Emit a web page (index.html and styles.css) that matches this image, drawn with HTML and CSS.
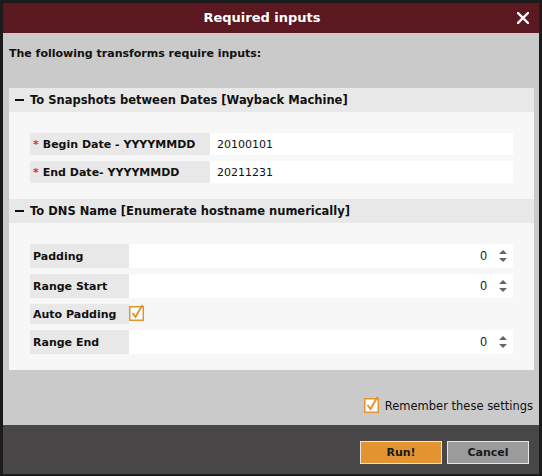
FILE: index.html
```html
<!DOCTYPE html>
<html>
<head>
<meta charset="utf-8">
<link rel="stylesheet" href="styles.css">
</head>
<body>
<div class="dialog">
  <div class="titlebar">
    <span class="title">Required inputs</span>
    <svg class="close" width="12" height="12" viewBox="0 0 12 12"><path d="M1 1L11 11M11 1L1 11" stroke="#fff" stroke-width="2.4" stroke-linecap="square"/></svg>
  </div>
  <div class="body">
    <div class="intro">The following transforms require inputs:</div>
    <div class="panel">
      <div class="sec-head"><span class="minus"></span>To Snapshots between Dates [Wayback Machine]</div>
      <div class="sec-body">
        <div class="row">
          <div class="label wide"><span class="req">*</span> Begin Date - YYYYMMDD</div>
          <div class="field">20100101</div>
        </div>
        <div class="row">
          <div class="label wide"><span class="req">*</span> End Date- YYYYMMDD</div>
          <div class="field">20211231</div>
        </div>
      </div>
      <div class="sec-head"><span class="minus"></span>To DNS Name [Enumerate hostname numerically]</div>
      <div class="sec-body">
        <div class="row tall">
          <div class="label narrow">Padding</div>
          <div class="field num"><span>0</span><span class="spin"><i class="up"></i><i class="down"></i></span></div>
        </div>
        <div class="row tall">
          <div class="label narrow">Range Start</div>
          <div class="field num"><span>0</span><span class="spin"><i class="up"></i><i class="down"></i></span></div>
        </div>
        <div class="row short">
          <div class="label narrow">Auto Padding</div>
          <div class="checkcell">
            <svg class="cb" width="16" height="18" viewBox="0 0 16 18"><rect x="0.75" y="3.75" width="13.5" height="13.5" fill="#fff" stroke="#e3932f" stroke-width="1.5"/><path d="M3.5 10L6.5 14L13.5 2" fill="none" stroke="#e3932f" stroke-width="2"/></svg>
          </div>
        </div>
        <div class="row tall">
          <div class="label narrow">Range End</div>
          <div class="field num"><span>0</span><span class="spin"><i class="up"></i><i class="down"></i></span></div>
        </div>
      </div>
    </div>
    <div class="remember">
      <svg class="cb" width="16" height="18" viewBox="0 0 16 18"><rect x="0.75" y="3.75" width="13.5" height="13.5" fill="#fff" stroke="#e3932f" stroke-width="1.5"/><path d="M3.5 10L6.5 14L13.5 2" fill="none" stroke="#e3932f" stroke-width="2"/></svg>
      <span>Remember these settings</span>
    </div>
  </div>
  <div class="footer">
    <button class="btn run">Run!</button>
    <button class="btn cancel">Cancel</button>
  </div>
</div>
</body>
</html>
```
FILE: styles.css
```css
* { box-sizing: border-box; }
html, body { margin: 0; padding: 0; }
body {
  width: 542px;
  height: 476px;
  font-family: "DejaVu Sans", Verdana, sans-serif;
  font-size: 11px;
  color: #111;
}
.dialog {
  width: 542px;
  height: 476px;
  border-style: solid;
  border-color: #1b1b1b;
  border-width: 3px 3px 2px 3px;
  display: flex;
  flex-direction: column;
  background: #cacaca;
}
.titlebar {
  height: 30px;
  background: #5b1820;
  display: flex;
  align-items: center;
  justify-content: center;
  padding-right: 18px;
  position: relative;
}
.title {
  color: #fff;
  font-weight: bold;
  font-size: 13px;
  line-height: 16px;
}
.close {
  position: absolute;
  right: 10px;
  top: 9px;
}
.body {
  height: 392px;
  padding: 0 5px 0 6px;
  display: flex;
  flex-direction: column;
}
.intro {
  font-weight: bold;
  line-height: 14px;
  padding-top: 14px;
  margin-bottom: 27px;
}
.panel {
  background: #f7f7f7;
}
.sec-head {
  height: 24px;
  background: #e8e8e8;
  display: flex;
  align-items: center;
  padding-left: 6px;
  font-weight: bold;
  font-size: 11.5px;
}
.minus {
  display: inline-block;
  width: 9px;
  height: 2px;
  background: #111;
  margin-right: 6px;
}
.sec-body {
  padding: 21px 21px 16px 21px;
  display: flex;
  flex-direction: column;
  gap: 6px;
}
.row {
  display: flex;
  height: 22px;
}
.row.tall { height: 24px; }
.row.short { height: 20px; }
.label {
  background: #e8e8e8;
  font-weight: bold;
  display: flex;
  align-items: center;
  padding-left: 3px;
  white-space: nowrap;
}
.label.wide { width: 180px; }
.label.narrow { width: 99px; }
.req { color: #d9323a; margin-right: 4px; }
.field {
  flex: 1;
  background: #fff;
  display: flex;
  align-items: center;
  padding-left: 7px;
}
.field.num {
  justify-content: flex-end;
  padding-right: 6px;
  font-family: "Liberation Sans", Arial, sans-serif;
  font-size: 12px;
}
.spin {
  display: flex;
  flex-direction: column;
  gap: 4px;
  margin-left: 12px;
  width: 8px;
}
.spin i {
  display: block;
  width: 0;
  height: 0;
  border-left: 4px solid transparent;
  border-right: 4px solid transparent;
}
.spin .up { border-bottom: 4px solid #666; }
.spin .down { border-top: 4px solid #666; }
.checkcell {
  display: flex;
  align-items: flex-end;
  padding-bottom: 3px;
}
.cb { display: block; }
.remember {
  margin-top: 25px;
  display: flex;
  justify-content: flex-end;
  align-items: flex-end;
  gap: 5px;
  padding-right: 1px;
  font-size: 11.5px;
}
.remember span { line-height: 14px; }
.footer {
  flex: 1;
  background: #484647;
  display: flex;
  justify-content: flex-end;
  align-items: flex-start;
  padding: 16px 10px 0 0;
  gap: 5px;
}
.btn {
  width: 82px;
  height: 23px;
  border: 1px solid #e6e6e6;
  font-family: "DejaVu Sans", Verdana, sans-serif;
  font-weight: bold;
  font-size: 11px;
  color: #1a1a1a;
  padding: 0;
}
.run { background: #e3932f; }
.cancel { background: #9b9b9b; }
```
